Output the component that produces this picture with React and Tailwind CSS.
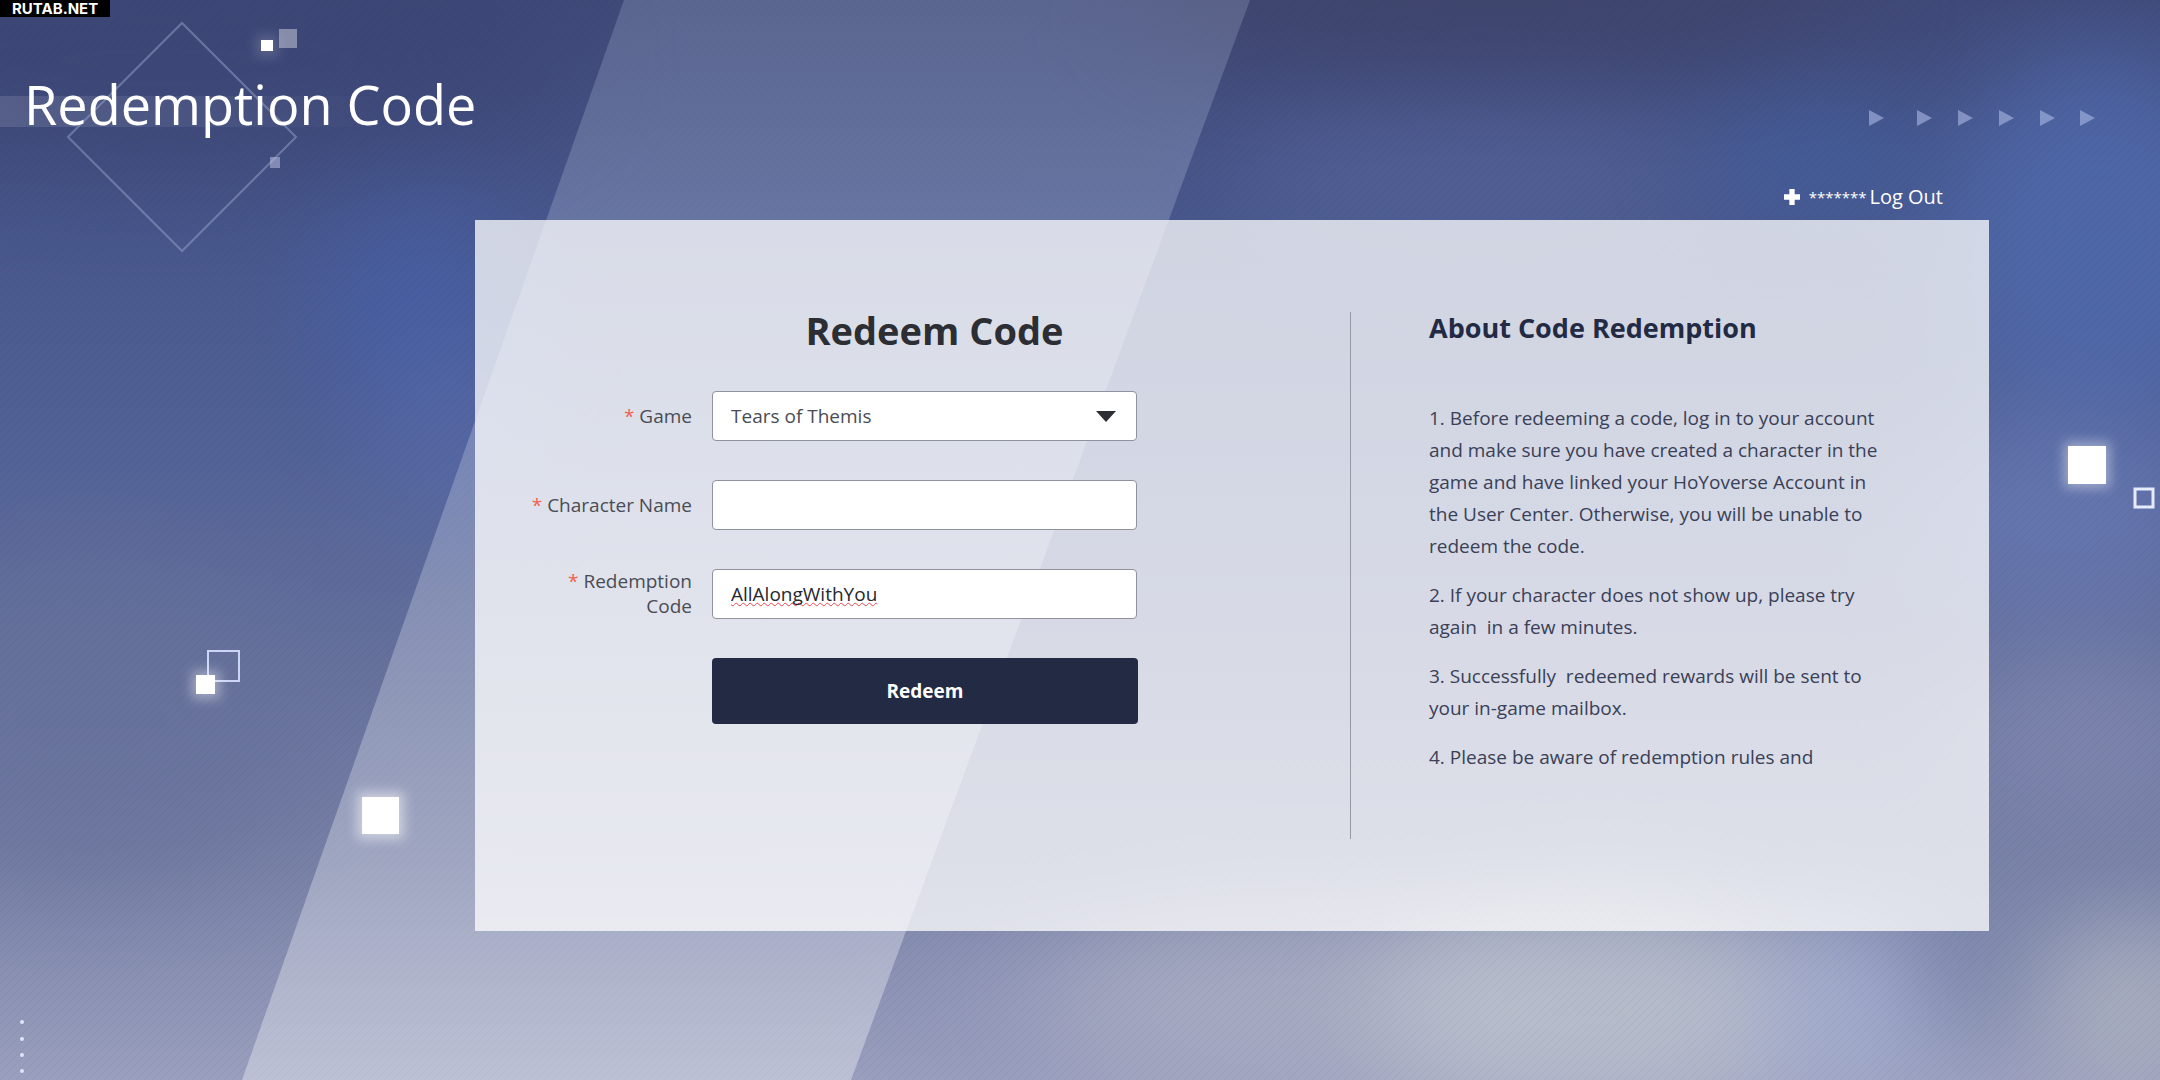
import React, { useState } from 'react';

const notes = [
  '1. Before redeeming a code, log in to your account and make sure you have created a character in the game and have linked your HoYoverse Account in the User Center. Otherwise, you will be unable to redeem the code.',
  '2. If your character does not show up, please try again  in a few minutes.',
  '3. Successfully  redeemed rewards will be sent to your in-game mailbox.',
  '4. Please be aware of redemption rules and',
];

const glows = [
  { cx: 160, cy: 60, rx: 420, ry: 120, fill: '#3a4473', opacity: 0.6 },
  { cx: 420, cy: 310, rx: 110, ry: 110, fill: '#4760a8', opacity: 0.7 },
  { cx: 450, cy: 440, rx: 80, ry: 90, fill: '#5c6fb0', opacity: 0.5 },
  { cx: 90, cy: 720, rx: 220, ry: 160, fill: '#66719a', opacity: 0.6 },
  { cx: 1500, cy: 0, rx: 380, ry: 70, fill: '#3f4469', opacity: 0.8 },
  { cx: 1480, cy: 180, rx: 260, ry: 60, fill: '#58669d', opacity: 0.7 },
  { cx: 1820, cy: 160, rx: 120, ry: 60, fill: '#4462a4', opacity: 0.7 },
  { cx: 2100, cy: 240, rx: 160, ry: 190, fill: '#506bae', opacity: 0.8 },
  { cx: 2060, cy: 520, rx: 150, ry: 110, fill: '#6a7bb6', opacity: 0.7 },
  { cx: 2080, cy: 740, rx: 130, ry: 90, fill: '#838bb2', opacity: 0.7 },
  { cx: 1010, cy: 1020, rx: 100, ry: 70, fill: '#969bbd', opacity: 0.7 },
  { cx: 1300, cy: 1000, rx: 260, ry: 90, fill: '#acb0c4', opacity: 0.8 },
  { cx: 1600, cy: 1010, rx: 230, ry: 110, fill: '#bac0cd', opacity: 0.9 },
  { cx: 1850, cy: 1010, rx: 90, ry: 90, fill: '#a6afd2', opacity: 0.8 },
  { cx: 1980, cy: 940, rx: 50, ry: 80, fill: '#7884a8', opacity: 0.9 },
  { cx: 2130, cy: 1010, rx: 90, ry: 80, fill: '#adb3c0', opacity: 0.9 },
];

const arrows = [1869, 1917, 1958, 1999, 2040, 2080];
const dots = [1022, 1039, 1055, 1071];

// Decorative background: soft colours, slanted light band and floating squares
const Backdrop = () => (
  <svg
    className="absolute inset-0 w-full h-full"
    viewBox="0 0 2160 1080"
    preserveAspectRatio="xMidYMid slice"
    aria-hidden="true"
  >
    <defs>
      <linearGradient id="sky" x1="0" y1="0" x2="0" y2="1">
        <stop offset="0" stopColor="#404a79" />
        <stop offset="0.2" stopColor="#47568a" />
        <stop offset="0.42" stopColor="#526296" />
        <stop offset="0.62" stopColor="#66719c" />
        <stop offset="0.8" stopColor="#7881a6" />
        <stop offset="1" stopColor="#9a9fbe" />
      </linearGradient>
      <linearGradient id="band" x1="0" y1="0" x2="0" y2="1">
        <stop offset="0" stopColor="#dceaff" stopOpacity="0.17" />
        <stop offset="0.5" stopColor="#f0f4ff" stopOpacity="0.25" />
        <stop offset="1" stopColor="#fff" stopOpacity="0.35" />
      </linearGradient>
      <linearGradient id="strip" x1="0" y1="0" x2="1" y2="0">
        <stop offset="0" stopColor="#fff" stopOpacity="0.12" />
        <stop offset="1" stopColor="#fff" stopOpacity="0" />
      </linearGradient>
      <pattern id="weave" width="8" height="8" patternUnits="userSpaceOnUse">
        <path d="M-2 2L2 -2M0 8L8 0M6 10L10 6" stroke="#1d2950" strokeWidth="1" strokeOpacity="0.06" />
      </pattern>
      <filter id="soft" x="-150%" y="-150%" width="400%" height="400%" colorInterpolationFilters="sRGB">
        <feGaussianBlur stdDeviation="50" />
      </filter>
      <filter id="halo" x="-80%" y="-80%" width="260%" height="260%">
        <feGaussianBlur stdDeviation="6" />
      </filter>
    </defs>

    <rect width="2160" height="1080" fill="url(#sky)" />
    {glows.map((g, i) => (
      <ellipse key={i} {...g} filter="url(#soft)" />
    ))}
    <rect width="2160" height="1080" fill="url(#weave)" />
    <polygon points="624,0 1250,0 851,1080 242,1080" fill="url(#band)" />

    <rect x="0" y="96" width="390" height="31" fill="url(#strip)" />
    <path d="M182 23L296 137L182 251L68 137Z" fill="none" stroke="#9aa4cc" strokeOpacity="0.5" strokeWidth="2" />
    <rect x="256" y="35" width="22" height="22" fill="#fff" opacity="0.15" filter="url(#halo)" />
    <rect x="261" y="40" width="12" height="11" fill="#fff" />
    <rect x="279" y="29" width="18" height="19" fill="#fff" opacity="0.38" />
    <rect x="270" y="157" width="10" height="11" fill="#c3cae8" opacity="0.5" />

    {arrows.map((x) => (
      <path key={x} d={`M${x} 110L${x + 15} 118L${x} 126Z`} fill="#a3b1dd" opacity="0.65" />
    ))}

    <rect x="208" y="651" width="31" height="30" fill="none" stroke="#ccd5f5" strokeWidth="2" />
    <rect x="192" y="671" width="28" height="28" fill="#fff" opacity="0.4" filter="url(#halo)" />
    <rect x="196" y="675" width="19" height="19" fill="#fff" />
    <rect x="357" y="792" width="47" height="47" fill="#fff" opacity="0.5" filter="url(#halo)" />
    <rect x="362" y="797" width="37" height="37" fill="#fff" />
    <rect x="2064" y="442" width="46" height="46" fill="#fff" opacity="0.4" filter="url(#halo)" />
    <rect x="2068" y="446" width="38" height="38" fill="#fff" />
    <rect x="2135" y="489" width="18" height="18" fill="none" stroke="#e6ecff" strokeWidth="3" />

    {dots.map((y) => (
      <circle key={y} cx="22" cy={y} r="2" fill="#dfe4fb" />
    ))}
  </svg>
);

const Field = ({ id, label, children }) => (
  <div className="flex items-center gap-5">
    <label
      htmlFor={id}
      className="w-44 shrink-0 whitespace-pre-line text-right text-[19px] leading-[25px] text-[#4a4c55]"
    >
      <span className="text-[#f4604f]">*</span> {label}
    </label>
    <div className="relative w-[425px]">{children}</div>
  </div>
);

const boxClass =
  'block w-full h-[50px] appearance-none rounded border border-[#8f929f] bg-white px-[18px] text-[19px] outline-none';

const App = () => {
  const [game, setGame] = useState('Tears of Themis');
  const [character, setCharacter] = useState('');
  const [code, setCode] = useState('AllAlongWithYou');

  return (
    <div className="relative min-h-screen overflow-hidden bg-[#5667a0] font-['Open_Sans','Noto_Sans',sans-serif]">
      <Backdrop />

      <div className="absolute left-0 top-0 bg-black px-3 font-['Inter',sans-serif] text-[15px] leading-[17px] font-bold text-white">
        RUTAB.NET
      </div>

      <div className="relative pb-[149px]">
        <header className="px-6 pt-[68px]">
          <h1 className="text-[54px] leading-[72px] text-white">Redemption Code</h1>
        </header>

        <div className="pl-[475px] pr-[171px] pt-[42px]">
          {/* Account */}
          <div className="flex items-center justify-end gap-[3px] pr-[46px] h-[30px] mb-2 text-[20px] text-white">
            <svg className="w-4 h-4 mr-1.5" viewBox="0 0 15 15" aria-hidden="true">
              <path d="M5 0H10V5H15V10H10V15H5V10H0V5H5Z" fill="#fff" />
            </svg>
            <span className="text-[15px]">*******</span>
            <button type="button" className="cursor-pointer">Log Out</button>
          </div>

          {/* Panel */}
          <main className="flex min-h-[711px] bg-white/75 pl-[41px] py-[92px] pr-[100px]">
            <form className="flex flex-col" onSubmit={(e) => e.preventDefault()}>
              <h2 className="ml-[216px] w-[405px] text-center text-[38px] leading-[36px] font-bold text-[#2c2e33]">
                Redeem Code
              </h2>

              <div className="mt-[43px] flex flex-col gap-[39px]">
                <Field id="game" label="Game">
                  <select
                    id="game"
                    value={game}
                    onChange={(e) => setGame(e.target.value)}
                    className={`${boxClass} text-[#4a4c55]`}
                  >
                    <option>Tears of Themis</option>
                  </select>
                  <svg
                    className="pointer-events-none absolute right-[21px] top-5 w-5 h-[11px]"
                    viewBox="0 0 20 11"
                    aria-hidden="true"
                  >
                    <path d="M0 0H20L10 11Z" fill="#2c2e33" />
                  </svg>
                </Field>

                <Field id="character" label="Character Name">
                  <input
                    id="character"
                    type="text"
                    value={character}
                    onChange={(e) => setCharacter(e.target.value)}
                    className={`${boxClass} text-[#26282e]`}
                  />
                </Field>

                <Field id="code" label={'Redemption\nCode'}>
                  <input
                    id="code"
                    type="text"
                    value={code}
                    onChange={(e) => setCode(e.target.value)}
                    className={`${boxClass} text-[#26282e] underline decoration-wavy decoration-[#e8464b] decoration-1 underline-offset-1 [text-decoration-skip-ink:none]`}
                  />
                </Field>

                <button
                  type="submit"
                  className="ml-[196px] h-[66px] w-[426px] cursor-pointer rounded bg-[#232a44] text-[19px] font-bold text-white"
                >
                  Redeem
                </button>
              </div>
            </form>

            {/* Rules */}
            <aside className="ml-auto border-l border-[#9698a5] pl-[78px] text-[#3a4057]">
              <h3 className="text-[27px] leading-8 font-bold text-[#232a44]">About Code Redemption</h3>
              <div className="mt-[58px] flex w-[460px] flex-col gap-[17px] text-[19px] leading-8 whitespace-pre-wrap">
                {notes.map((note) => (
                  <p key={note}>{note}</p>
                ))}
              </div>
            </aside>
          </main>
        </div>
      </div>
    </div>
  );
};

export default App;
